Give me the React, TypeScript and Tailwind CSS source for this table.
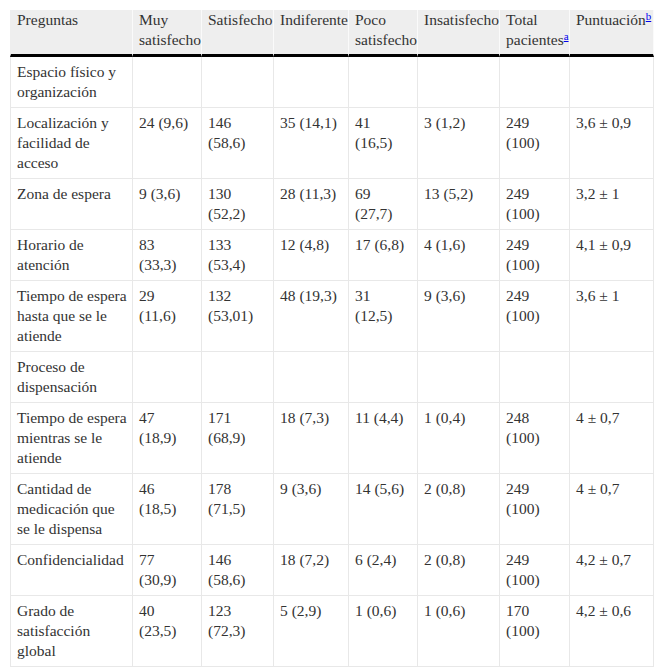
import React from 'react';

const widths = [123, 69, 72, 75, 69, 82, 70, 84];

const rows: string[][] = [
  ['Espacio físico y organización', '', '', '', '', '', '', ''],
  ['Localización y facilidad de acceso', '24 (9,6)', '146 (58,6)', '35 (14,1)', '41 (16,5)', '3 (1,2)', '249 (100)', '3,6 ± 0,9'],
  ['Zona de espera', '9 (3,6)', '130 (52,2)', '28 (11,3)', '69 (27,7)', '13 (5,2)', '249 (100)', '3,2 ± 1'],
  ['Horario de atención', '83 (33,3)', '133 (53,4)', '12 (4,8)', '17 (6,8)', '4 (1,6)', '249 (100)', '4,1 ± 0,9'],
  ['Tiempo de espera hasta que se le atiende', '29 (11,6)', '132 (53,01)', '48 (19,3)', '31 (12,5)', '9 (3,6)', '249 (100)', '3,6 ± 1'],
  ['Proceso de dispensación', '', '', '', '', '', '', ''],
  ['Tiempo de espera mientras se le atiende', '47 (18,9)', '171 (68,9)', '18 (7,3)', '11 (4,4)', '1 (0,4)', '248 (100)', '4 ± 0,7'],
  ['Cantidad de medicación que se le dispensa', '46 (18,5)', '178 (71,5)', '9 (3,6)', '14 (5,6)', '2 (0,8)', '249 (100)', '4 ± 0,7'],
  ['Confidencialidad', '77 (30,9)', '146 (58,6)', '18 (7,2)', '6 (2,4)', '2 (0,8)', '249 (100)', '4,2 ± 0,7'],
  ['Grado de satisfacción global', '40 (23,5)', '123 (72,3)', '5 (2,9)', '1 (0,6)', '1 (0,6)', '170 (100)', '4,2 ± 0,6'],
];

// footnote marker link, blue and underlined
const Sup: React.FC<{ children: React.ReactNode }> = ({ children }) => (
  <a className="relative -top-[5px] text-[11px] leading-none text-[#0000ee] underline">{children}</a>
);

const headers: React.ReactNode[] = [
  'Preguntas',
  'Muy satisfecho',
  'Satisfecho',
  'Indiferente',
  'Poco satisfecho',
  'Insatisfecho',
  <>Total pacientes<Sup>a</Sup></>,
  <>Puntuación<Sup>b</Sup></>,
];

const App: React.FC = () => {
  return (
    <div className="bg-white min-h-[670px] pt-[10px] pl-[10px] font-['Liberation_Serif',serif] text-[15.5px] text-[#333]">
      <table className="table-fixed border-separate border-spacing-0 w-[644px]">
        <colgroup>
          {widths.map((w, i) => (
            <col key={i} style={{ width: w }} />
          ))}
        </colgroup>
        <thead>
          <tr>
            {headers.map((h, i) => (
              <th
                key={i}
                className={`bg-[#eeeeee] text-left font-normal align-top leading-[20px] pl-[6px] pr-[2px] pt-0 pb-[4px] border-b-[3px] border-b-black border-r border-r-[#fafafa] ${i === 0 ? 'border-l border-l-[#eeeeee]' : ''}`}
              >
                {h}
              </th>
            ))}
          </tr>
        </thead>
        <tbody>
          {rows.map((r, ri) => (
            <tr key={ri}>
              {r.map((c, ci) => (
                <td
                  key={ci}
                  className={`align-top leading-[20px] pl-[6px] pt-[5px] pb-[5px] border-b border-r border-[#e8e8e8] ${ci === 0 ? 'border-l pr-[4px]' : 'pr-[6px]'}`}
                >
                  {c}
                </td>
              ))}
            </tr>
          ))}
        </tbody>
      </table>
    </div>
  );
};

export default App;
